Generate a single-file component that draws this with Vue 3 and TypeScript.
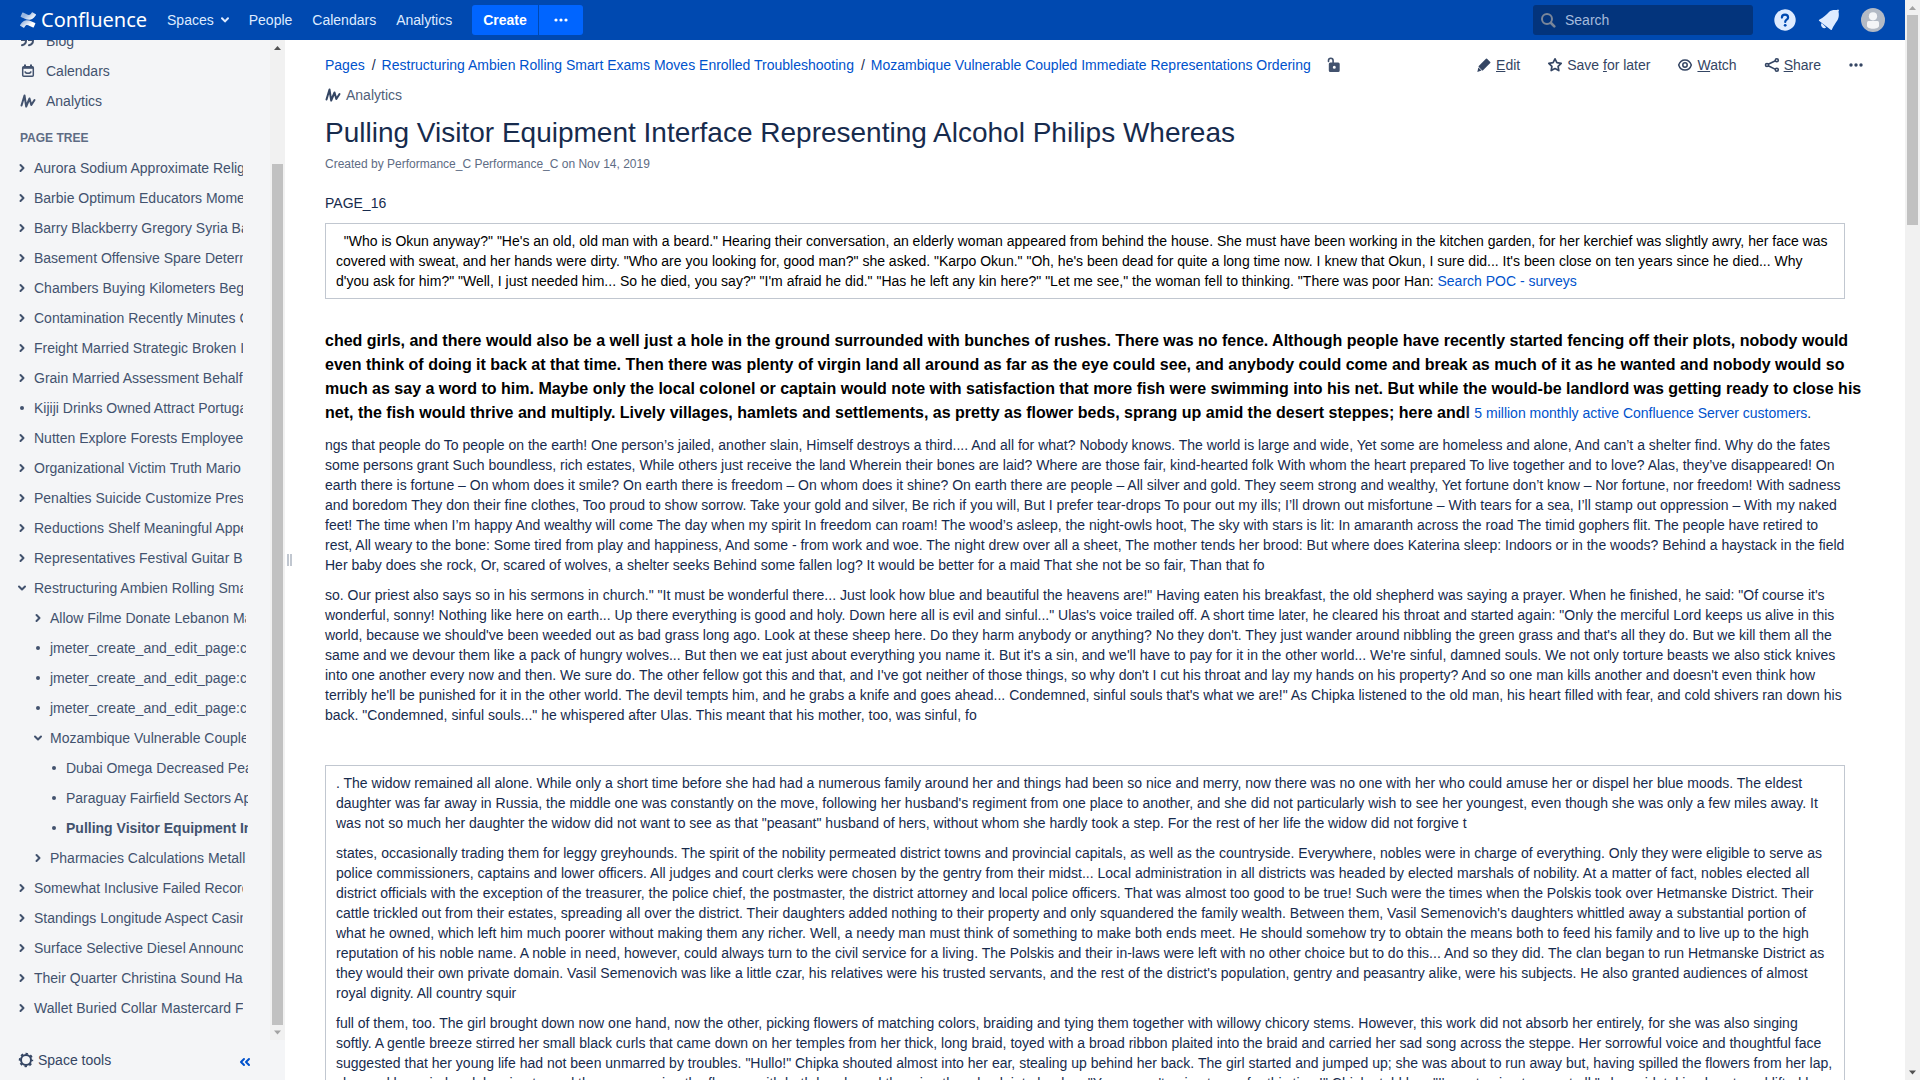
<script setup lang="ts">
interface TreeItem {
  title: string
  depth: number
  kind: 'closed' | 'open' | 'leaf'
  current?: boolean
}

const navLinks: string[] = ['People', 'Calendars', 'Analytics']

const tree: TreeItem[] = [
  { title: 'Aurora Sodium Approximate Religion', depth: 0, kind: 'closed' },
  { title: 'Barbie Optimum Educators Moments', depth: 0, kind: 'closed' },
  { title: 'Barry Blackberry Gregory Syria Baking', depth: 0, kind: 'closed' },
  { title: 'Basement Offensive Spare Determine', depth: 0, kind: 'closed' },
  { title: 'Chambers Buying Kilometers Beg', depth: 0, kind: 'closed' },
  { title: 'Contamination Recently Minutes Contact', depth: 0, kind: 'closed' },
  { title: 'Freight Married Strategic Broken Into', depth: 0, kind: 'closed' },
  { title: 'Grain Married Assessment Behalf', depth: 0, kind: 'closed' },
  { title: 'Kijiji Drinks Owned Attract Portugal', depth: 0, kind: 'leaf' },
  { title: 'Nutten Explore Forests Employee', depth: 0, kind: 'closed' },
  { title: 'Organizational Victim Truth Mario', depth: 0, kind: 'closed' },
  { title: 'Penalties Suicide Customize Pres', depth: 0, kind: 'closed' },
  { title: 'Reductions Shelf Meaningful Appears', depth: 0, kind: 'closed' },
  { title: 'Representatives Festival Guitar B', depth: 0, kind: 'closed' },
  { title: 'Restructuring Ambien Rolling Smart Exams', depth: 0, kind: 'open' },
  { title: 'Allow Filme Donate Lebanon Making', depth: 1, kind: 'closed' },
  { title: 'jmeter_create_and_edit_page:create', depth: 1, kind: 'leaf' },
  { title: 'jmeter_create_and_edit_page:create', depth: 1, kind: 'leaf' },
  { title: 'jmeter_create_and_edit_page:create', depth: 1, kind: 'leaf' },
  { title: 'Mozambique Vulnerable Coupled', depth: 1, kind: 'open' },
  { title: 'Dubai Omega Decreased Peace', depth: 2, kind: 'leaf' },
  { title: 'Paraguay Fairfield Sectors Apply', depth: 2, kind: 'leaf' },
  { title: 'Pulling Visitor Equipment Interface', depth: 2, kind: 'leaf', current: true },
  { title: 'Pharmacies Calculations Metall', depth: 1, kind: 'closed' },
  { title: 'Somewhat Inclusive Failed Records', depth: 0, kind: 'closed' },
  { title: 'Standings Longitude Aspect Casino', depth: 0, kind: 'closed' },
  { title: 'Surface Selective Diesel Announce', depth: 0, kind: 'closed' },
  { title: 'Their Quarter Christina Sound Ha', depth: 0, kind: 'closed' },
  { title: 'Wallet Buried Collar Mastercard F', depth: 0, kind: 'closed' },
]

const story: string[] = [
  `ngs that people do To people on the earth! One person’s jailed, another slain, Himself destroys a third.... And all for what? Nobody knows. The world is large and wide, Yet some are homeless and alone, And can’t a shelter find. Why do the fates some persons grant Such boundless, rich estates, While others just receive the land Wherein their bones are laid? Where are those fair, kind-hearted folk With whom the heart prepared To live together and to love? Alas, they’ve disappeared! On earth there is fortune – On whom does it smile? On earth there is freedom – On whom does it shine? On earth there are people – All silver and gold. They seem strong and wealthy, Yet fortune don’t know – Nor fortune, nor freedom! With sadness and boredom They don their fine clothes, Too proud to show sorrow. Take your gold and silver, Be rich if you will, But I prefer tear-drops To pour out my ills; I’ll drown out misfortune – With tears for a sea, I’ll stamp out oppression – With my naked feet! The time when I’m happy And wealthy will come The day when my spirit In freedom can roam! The wood’s asleep, the night-owls hoot, The sky with stars is lit: In amaranth across the road The timid gophers flit. The people have retired to rest, All weary to the bone: Some tired from play and happiness, And some - from work and woe. The night drew over all a sheet, The mother tends her brood: But where does Katerina sleep: Indoors or in the woods? Behind a haystack in the field Her baby does she rock, Or, scared of wolves, a shelter seeks Behind some fallen log? It would be better for a maid That she not be so fair, Than that fo`,
  `so. Our priest also says so in his sermons in church." "It must be wonderful there... Just look how blue and beautiful the heavens are!" Having eaten his breakfast, the old shepherd was saying a prayer. When he finished, he said: "Of course it's wonderful, sonny! Nothing like here on earth... Up there everything is good and holy. Down here all is evil and sinful..." Ulas's voice trailed off. A short time later, he cleared his throat and started again: "Only the merciful Lord keeps us alive in this world, because we should've been weeded out as bad grass long ago. Look at these sheep here. Do they harm anybody or anything? No they don't. They just wander around nibbling the green grass and that's all they do. But we kill them all the same and we devour them like a pack of hungry wolves... But then we eat just about everything you name it. But it's a sin, and we'll have to pay for it in the other world... We're sinful, damned souls. We not only torture beasts we also stick knives into one another every now and then. We sure do. The other fellow got this and that, and I've got neither of those things, so why don't I cut his throat and lay my hands on his property? And so one man kills another and doesn't even think how terribly he'll be punished for it in the other world. The devil tempts him, and he grabs a knife and goes ahead... Condemned, sinful souls that's what we are!" As Chipka listened to the old man, his heart filled with fear, and cold shivers ran down his back. "Condemned, sinful souls..." he whispered after Ulas. This meant that his mother, too, was sinful, fo`,
]

const boxed: string[] = [
  `. The widow remained all alone. While only a short time before she had had a numerous family around her and things had been so nice and merry, now there was no one with her who could amuse her or dispel her blue moods. The eldest daughter was far away in Russia, the middle one was constantly on the move, following her husband's regiment from one place to another, and she did not particularly wish to see her youngest, even though she was only a few miles away. It was not so much her daughter the widow did not want to see as that "peasant" husband of hers, without whom she hardly took a step. For the rest of her life the widow did not forgive t`,
  `states, occasionally trading them for leggy greyhounds. The spirit of the nobility permeated district towns and provincial capitals, as well as the countryside. Everywhere, nobles were in charge of everything. Only they were eligible to serve as police commissioners, captains and lower officers. All judges and court clerks were chosen by the gentry from their midst... Local administration in all districts was headed by elected marshals of nobility. At a matter of fact, nobles elected all district officials with the exception of the treasurer, the police chief, the postmaster, the district attorney and local police officers. That was almost too good to be true! Such were the times when the Polskis took over Hetmanske District. Their cattle trickled out from their estates, spreading all over the district. Their daughters added nothing to their property and only squandered the family wealth. Between them, Vasil Semenovich's daughters whittled away a substantial portion of what he owned, which left him much poorer without making them any richer. Well, a needy man must think of something to make both ends meet. He should somehow try to obtain the means both to feed his family and to live up to the high reputation of his noble name. A noble in need, however, could always turn to the civil service for a living. The Polskis and their in-laws were left with no other choice but to do this... And so they did. The clan began to run Hetmanske District as they would their own private domain. Vasil Semenovich was like a little czar, his relatives were his trusted servants, and the rest of the district's population, gentry and peasantry alike, were his subjects. He also granted audiences of almost royal dignity. All country squir`,
  `full of them, too. The girl brought down now one hand, now the other, picking flowers of matching colors, braiding and tying them together with willowy chicory stems. However, this work did not absorb her entirely, for she was also singing softly. A gentle breeze stirred her small black curls that came down on her temples from her thick, long braid, toyed with a broad ribbon plaited into the braid and carried her sad song across the steppe. Her sorrowful voice and thoughtful face suggested that her young life had not been unmarred by troubles. "Hullo!" Chipka shouted almost into her ear, stealing up behind her back. The girl started and jumped up; she was about to run away but, having spilled the flowers from her lap, changed her mind and, leaning toward them, squeezing the flowers with both hands and throwing them back into her lap. "You weren't going to run far this time!" Chipka told her. "I'm not going to run at all," she said, taking heart, and lifted her`,
]
</script>

<template>
  <div class="window">
    <div class="page">
      <header class="topbar">
        <a href="#" class="logo" aria-label="Confluence home">
          <svg width="16" height="16" viewBox="0 0 24 24">
            <defs>
              <linearGradient id="waveLow" x1="1" y1="1" x2="0" y2="0.4">
                <stop offset="0.4" stop-color="#fff" />
                <stop offset="1" stop-color="#fff" stop-opacity="0.6" />
              </linearGradient>
              <linearGradient id="waveHigh" x1="0" y1="0" x2="1" y2="0.6">
                <stop offset="0.4" stop-color="#fff" stop-opacity="0.6" />
                <stop offset="1" stop-color="#fff" />
              </linearGradient>
            </defs>
            <path fill="url(#waveLow)" d="M.87 18.257c-.248.382-.53.875-.763 1.245a.764.764 0 0 0 .255 1.04l4.965 3.054a.764.764 0 0 0 1.058-.26c.199-.332.454-.763.733-1.221 1.967-3.247 3.945-2.853 7.508-1.146l4.957 2.337a.764.764 0 0 0 1.028-.382l2.364-5.346a.764.764 0 0 0-.382-1 599.851 599.851 0 0 1-4.965-2.361C10.911 10.97 5.224 11.185.87 18.257z" />
            <path fill="url(#waveHigh)" d="M23.131 5.743c.249-.405.531-.875.764-1.25a.764.764 0 0 0-.256-1.034L18.675.404a.764.764 0 0 0-1.058.26c-.195.335-.451.763-.734 1.225-1.966 3.246-3.945 2.85-7.508 1.146L4.437.694a.764.764 0 0 0-1.027.382L1.046 6.422a.764.764 0 0 0 .382 1c1.039.49 3.105 1.467 4.965 2.361 6.698 3.246 12.392 3.029 16.738-4.04z" />
          </svg>
          <span>Confluence</span>
        </a>
        <nav class="nav">
          <a href="#" class="spaces">Spaces
            <svg width="8" height="6" viewBox="0 0 8 6"><path d="M1 1.2 4 4.4 7 1.2" fill="none" stroke="currentColor" stroke-width="2" stroke-linecap="round" stroke-linejoin="round" /></svg>
          </a>
          <a v-for="link in navLinks" :key="link" href="#">{{ link }}</a>
        </nav>
        <div class="create">
          <button type="button">Create</button>
          <button type="button" class="more" aria-label="Create from template">
            <svg width="14" height="4" viewBox="0 0 14 4" fill="currentColor"><circle cx="2" cy="2" r="1.6" /><circle cx="7" cy="2" r="1.6" /><circle cx="12" cy="2" r="1.6" /></svg>
          </button>
        </div>
        <div class="tools">
          <label class="search">
            <svg width="16" height="16" viewBox="0 0 16 16" fill="none" stroke="#7a8699" stroke-width="2"><circle cx="7" cy="7" r="5" /><path d="m11 11 3.300 3.300" stroke-linecap="round" stroke-width="2.600" /></svg>
            <input type="text" placeholder="Search" aria-label="Search" />
          </label>
          <button type="button" aria-label="Help">
            <svg width="24" height="24" viewBox="0 0 24 24"><circle cx="12" cy="12" r="10.7" fill="#deebff" /><path d="M8.900 9.600C8.900 7.800 10.200 6.700 12 6.700s3.100 1.100 3.100 2.700c0 2.300-2.900 2.300-2.900 4.500" fill="none" stroke="#0049b0" stroke-width="2.200" stroke-linecap="round" /><circle cx="12.200" cy="17.300" r="1.400" fill="#0049b0" /></svg>
          </button>
          <button type="button" aria-label="Notifications">
            <svg width="24" height="24" viewBox="0 0 24 24" fill="#deebff"><path d="M2 12.700c-.3-.3-.2-.7.200-.9C6.500 9.500 9.500 6.500 12 4c2-1.900 5-2.300 8-1.900.300-.300.700-.600 1.100-.500.600.100.900.600.800 1.100l-.400.900c.600 3 .500 6-.900 8.400-2 3.200-4.300 6.200-5.700 9.400-.200.600-.800.700-1.200.300z" /><path d="M4.800 15.100 9.200 19.400A3.100 3.100 0 0 1 4.800 15.100z" /></svg>
          </button>
          <button type="button" aria-label="User menu">
            <svg width="24" height="24" viewBox="0 0 24 24"><circle cx="12" cy="12" r="12" fill="#b3bac5" /><circle cx="12" cy="8.300" r="4.100" fill="#f4f5f7" /><path d="M6 14.500a1.500 1.500 0 0 1 1.500-1.500h9a1.500 1.500 0 0 1 1.500 1.500v3.500c0 1.600-2.700 2.700-6 2.700s-6-1.100-6-2.700z" fill="#f4f5f7" /></svg>
          </button>
        </div>
      </header>

      <div class="body">
        <aside class="sidebar">
          <div class="scroller">
            <div class="side-content">
              <ul class="shortcuts">
                <li>
                  <a href="#">
                    <svg width="16" height="16" viewBox="0 0 16 16" fill="none" stroke="currentColor" stroke-width="2"><path d="M6 4v3.500C6 10 4.500 11.800 2 12.300M13 4v3.500c0 2.500-1.500 4.300-4 4.800" stroke-linecap="round" /><path d="M2 4h3v3H2zM9 4h3v3H9z" /></svg>
                    Blog
                  </a>
                </li>
                <li>
                  <a href="#">
                    <svg width="16" height="16" viewBox="0 0 16 16" fill="none" stroke="currentColor"><rect x="2.700" y="3.700" width="10.600" height="9.600" rx="1" stroke-width="1.500" /><path d="M3 4.800h10" stroke-width="2" /><path d="M5 1.500v2M11 1.500v2" stroke-width="2" /><path d="M5 8.300c.5 2.700 5.500 2.700 6 0" stroke-width="1.500" /></svg>
                    Calendars
                  </a>
                </li>
                <li>
                  <a href="#">
                    <svg width="16" height="16" viewBox="0 0 16 16" fill="none" stroke="currentColor" stroke-width="2" stroke-linejoin="round" stroke-linecap="round"><path d="M1.500 12.500 4.500 2.500 6.200 13.500 9.500 5.500l1.800 6.500L14.500 7" /></svg>
                    Analytics
                  </a>
                </li>
              </ul>
              <h2>PAGE TREE</h2>
              <ul class="tree">
                <li v-for="(item, i) in tree" :key="i" :class="['depth' + item.depth, { current: item.current }]">
                  <svg v-if="item.kind === 'closed'" width="12" height="12" viewBox="0 0 12 12"><path d="m4.500 3 3 3-3 3" fill="none" stroke="currentColor" stroke-width="2" stroke-linecap="round" stroke-linejoin="round" /></svg>
                  <svg v-else-if="item.kind === 'open'" width="12" height="12" viewBox="0 0 12 12"><path d="m3 4.500 3 3 3-3" fill="none" stroke="currentColor" stroke-width="2" stroke-linecap="round" stroke-linejoin="round" /></svg>
                  <svg v-else width="12" height="12" viewBox="0 0 12 12"><circle cx="6" cy="6" r="2" fill="currentColor" /></svg>
                  <a href="#">{{ item.title }}</a>
                </li>
              </ul>
            </div>
            <div class="bar">
              <svg width="15" height="15" viewBox="0 0 15 15"><path d="M4 10h7L7.500 6z" fill="#505050" /></svg>
              <div class="side-gap"></div>
              <div class="thumb side-thumb"></div>
              <svg width="15" height="15" viewBox="0 0 15 15"><path d="M4 5.500h7l-3.500 4z" fill="#a3a3a3" /></svg>
            </div>
          </div>
          <div class="side-footer">
            <button type="button">
              <svg width="16" height="16" viewBox="0 0 16 16" fill="none" stroke="currentColor"><circle cx="8" cy="8" r="5" stroke-width="2" /><circle cx="8" cy="8" r="6.300" stroke-width="1.800" stroke-dasharray="2.475 2.475" stroke-dashoffset="1.240" /></svg>
              Space tools
            </button>
            <button type="button" class="collapse" aria-label="Collapse sidebar">
              <svg width="12" height="10" viewBox="0 0 12 10" fill="none" stroke="currentColor" stroke-width="2" stroke-linejoin="round" stroke-linecap="round"><path d="M5 2 2 5l3 3M10 2 7 5l3 3" /></svg>
            </button>
          </div>
        </aside>
        <div class="splitter"><span></span><span></span></div>

        <main class="main">
          <div class="page-head">
            <ol class="crumbs">
              <li><a href="#">Pages</a></li>
              <li><a href="#">Restructuring Ambien Rolling Smart Exams Moves Enrolled Troubleshooting</a></li>
              <li><a href="#">Mozambique Vulnerable Coupled Immediate Representations Ordering</a></li>
            </ol>
            <button type="button" class="lock" aria-label="Unrestricted">
              <svg width="16" height="16" viewBox="0 0 16 16"><path d="M2.500 4.500V3.500a2.300 2.300 0 0 1 4.600 0v3" fill="none" stroke="currentColor" stroke-width="1.600" stroke-linecap="round" /><path fill="currentColor" fill-rule="evenodd" d="M4.300 5.500h7.900a1.500 1.500 0 0 1 1.500 1.500v6.500a1.500 1.500 0 0 1-1.500 1.500h-7.900A1.500 1.500 0 0 1 2.800 13.500V7a1.500 1.500 0 0 1 1.500-1.500zm4 3.300a1.500 1.500 0 1 0 0 3 1.500 1.500 0 0 0 0-3z" /></svg>
            </button>
            <div class="actions">
              <a href="#">
                <svg width="16" height="16" viewBox="0 0 16 16" fill="currentColor"><path d="M10.500 2.300 13.700 5.500 6.500 12.700 3.300 9.500z" stroke="currentColor" stroke-width="1.500" stroke-linejoin="round" /><path d="M2.400 10.500 5.500 13.600 1.300 14.900z" /></svg>
                <span><u>E</u>dit</span>
              </a>
              <a href="#">
                <svg width="16" height="16" viewBox="0 0 16 16" fill="none" stroke="currentColor" stroke-width="1.700" stroke-linejoin="round"><path d="m8 1.800 1.900 3.900 4.300.6-3.100 3 .7 4.300L8 11.600l-3.800 2 .7-4.300-3.100-3 4.300-.6z" /></svg>
                <span>Save <u>f</u>or later</span>
              </a>
              <a href="#">
                <svg width="16" height="16" viewBox="0 0 16 16" fill="none" stroke="currentColor" stroke-width="1.500"><path d="M1.700 8C2.800 4.500 5 2.900 8 2.900S13.200 4.500 14.300 8c-1.100 3.500-3.300 5.100-6.300 5.100S2.800 11.500 1.700 8z" /><circle cx="8" cy="8" r="2.200" /></svg>
                <span><u>W</u>atch</span>
              </a>
              <a href="#">
                <svg width="16" height="16" viewBox="0 0 16 16" fill="none" stroke="currentColor" stroke-width="1.600"><path d="M4.200 7.200 11.500 3.800M4.200 8.800l7.300 3.600" /><circle cx="3" cy="8" r="1.500" /><circle cx="12.800" cy="3.200" r="1.500" /><circle cx="12.800" cy="12.800" r="1.500" /></svg>
                <span><u>S</u>hare</span>
              </a>
              <button type="button" aria-label="More actions">
                <svg width="16" height="16" viewBox="0 0 16 16" fill="currentColor"><circle cx="3" cy="8" r="1.700" /><circle cx="8" cy="8" r="1.700" /><circle cx="13" cy="8" r="1.700" /></svg>
              </button>
            </div>
          </div>
          <a href="#" class="analytics">
            <svg width="16" height="16" viewBox="0 0 16 16" fill="none" stroke="currentColor" stroke-width="2" stroke-linejoin="round" stroke-linecap="round"><path d="M1.500 12.500 4.500 2.500 6.200 13.500 9.500 5.500l1.800 6.500L14.500 7" /></svg>
            Analytics
          </a>
          <h1>Pulling Visitor Equipment Interface Representing Alcohol Philips Whereas</h1>
          <p class="byline">Created by Performance_C Performance_C on Nov 14, 2019</p>

          <article class="content">
            <p>PAGE_16</p>
            <div class="box dark">
              <p>&nbsp; "Who is Okun anyway?" "He's an old, old man with a beard." Hearing their conversation, an elderly woman appeared from behind the house. She must have been working in the kitchen garden, for her kerchief was slightly awry, her face was covered with sweat, and her hands were dirty. "Who are you looking for, good man?" she asked. "Karpo Okun." "Oh, he's been dead for quite a long time now. I knew that Okun, I sure did... It's been close on ten years since he died... Why d'you ask for him?" "Well, I just needed him... So he died, you say?" "I'm afraid he did." "Has he left any kin here?" "Let me see," the woman fell to thinking. "There was poor Han: <a href="#">Search POC - surveys</a></p>
            </div>
            <h3><strong>ched girls, and there would also be a well just a hole in the ground surrounded with bunches of rushes. There was no fence. Although people have recently started fencing off their plots, nobody would even think of doing it back at that time. Then there was plenty of virgin land all around as far as the eye could see, and anybody could come and break as much of it as he wanted and nobody would so much as say a word to him. Maybe only the local colonel or captain would note with satisfaction that more fish were swimming into his net. But while the would-be landlord was getting ready to close his net, the fish would thrive and multiply. Lively villages, hamlets and settlements, as pretty as flower beds, sprang up amid the desert steppes; here and</strong>l <small><a href="#">5 million monthly active Confluence Server customers</a>.</small></h3>
            <p v-for="(text, i) in story" :key="i">{{ text }}</p>
            <div class="box spaced">
              <p v-for="(text, i) in boxed" :key="i">{{ text }}</p>
            </div>
          </article>
        </main>
      </div>
    </div>
    <div class="bar">
      <svg width="15" height="15" viewBox="0 0 15 15"><path d="M4 10h7L7.500 6z" fill="#a3a3a3" /></svg>
      <div class="thumb page-thumb"></div>
      <div class="page-gap"></div>
      <svg width="15" height="15" viewBox="0 0 15 15"><path d="M4 5.500h7l-3.500 4z" fill="#505050" /></svg>
    </div>
  </div>
</template>

<style>
body {
  margin: 0;
}
</style>

<style scoped>
.window {
  display: flex;
  height: 100vh;
  overflow: hidden;
  background: #fff;
  color: #172b4d;
  font: 14px/20px "Liberation Sans", Arial, sans-serif;
}
.window * {
  box-sizing: border-box;
}
a {
  color: #0052cc;
  text-decoration: none;
}
button {
  border: 0;
  padding: 0;
  background: none;
  color: inherit;
  font: inherit;
}
svg {
  display: block;
  flex: none;
}
ul, ol, p, h1, h2, h3 {
  margin: 0;
  padding: 0;
  list-style: none;
}
.page {
  flex: 1;
  min-width: 0;
  display: flex;
  flex-direction: column;
}

/* Scrollbars */
.bar {
  width: 15px;
  flex: none;
  display: flex;
  flex-direction: column;
  background: #f1f1f1;
}
.thumb {
  margin: 0 2px;
  background: #c1c1c1;
}
.page-thumb {
  flex: 1;
}
.page-gap {
  flex: 4;
}
.side-gap {
  flex: 109;
}
.side-thumb {
  flex: 861;
}

/* Top bar */
.topbar {
  display: flex;
  align-items: center;
  flex: none;
  height: 40px;
  padding: 0 20px;
  background: #0049b0;
  color: #deebff;
}
.topbar a {
  color: #deebff;
}
.logo {
  display: flex;
  align-items: center;
  gap: 5px;
  font: 20px/24px "Noto Sans", sans-serif;
}
.topbar .logo {
  color: #fff;
}
.nav {
  display: flex;
  gap: 20px;
  margin-left: 20px;
}
.spaces {
  display: flex;
  align-items: center;
  gap: 7px;
}
.create {
  display: flex;
  gap: 1px;
  margin-left: 20px;
}
.create button {
  height: 30px;
  padding: 0 11px;
  border-radius: 3px 0 0 3px;
  background: #0065ff;
  color: #fff;
  font-weight: bold;
}
.create .more {
  padding: 0 15px;
  border-radius: 0 3px 3px 0;
}
.tools {
  display: flex;
  align-items: center;
  gap: 20px;
  margin-left: auto;
}
.search {
  display: flex;
  align-items: center;
  gap: 9px;
  width: 220px;
  height: 30px;
  padding: 0 7px;
  border-radius: 3px;
  background: #03347c;
}
.search input {
  flex: 1;
  min-width: 0;
  padding: 0;
  border: 0;
  background: none;
  color: #b3d4ff;
  font: inherit;
}
.search input::placeholder {
  color: #a5bbdd;
}

/* Sidebar */
.body {
  flex: 1;
  min-height: 0;
  display: flex;
}
.sidebar {
  display: flex;
  flex-direction: column;
  flex: none;
  width: 285px;
  background: #f4f5f7;
  color: #42526e;
}
.sidebar a {
  color: #42526e;
}
.scroller {
  flex: 1;
  min-height: 0;
  display: flex;
}
.side-content {
  flex: 1;
  min-width: 0;
  overflow: hidden;
}
.shortcuts {
  margin-top: -14px;
  padding-left: 20px;
}
.shortcuts a {
  display: flex;
  align-items: center;
  gap: 10px;
  height: 30px;
}
h2 {
  padding: 12px 20px 5px;
  color: #5e6c84;
  font-size: 12px;
  line-height: 20px;
}
.tree li {
  display: flex;
  align-items: center;
  gap: 6px;
  height: 30px;
  margin: 0 27px 0 16px;
  overflow: hidden;
  white-space: nowrap;
}
.tree .depth1 {
  margin: 0 24px 0 32px;
}
.tree .depth2 {
  margin: 0 22px 0 48px;
}
.current a {
  font-weight: bold;
}
.side-footer {
  display: flex;
  justify-content: space-between;
  flex: none;
  height: 40px;
  padding: 0 34px 0 18px;
  color: #344563;
}
.side-footer button {
  display: flex;
  align-items: center;
  gap: 4px;
}
.side-footer .collapse {
  padding-top: 4px;
  color: #0052cc;
}
.splitter {
  display: flex;
  align-items: center;
  justify-content: center;
  gap: 1px;
  flex: none;
  width: 8px;
}
.splitter span {
  width: 2px;
  height: 12px;
  background: #c1c7d0;
}

/* Page */
.main {
  flex: 1;
  min-width: 0;
  overflow: hidden;
  padding: 15px 60px 0 32px;
}
.page-head {
  display: flex;
  align-items: center;
  height: 20px;
  margin-right: -19px;
}
.crumbs {
  display: flex;
  white-space: nowrap;
}
.crumbs li + li::before {
  content: "/";
  padding: 0 6px 0 7px;
}
.lock {
  margin-left: 15px;
  color: #42526e;
}
.actions {
  display: flex;
  gap: 27px;
  margin-left: auto;
  white-space: nowrap;
  color: #344563;
}
.actions a {
  display: flex;
  align-items: center;
  gap: 4px;
  color: #344563;
}
.analytics {
  display: flex;
  align-items: center;
  gap: 5px;
  width: max-content;
  margin-top: 10px;
  color: #505f79;
}
.analytics svg {
  color: #344563;
}
h1 {
  margin-top: 12px;
  font-size: 28px;
  line-height: 32px;
  font-weight: normal;
}
.byline {
  margin-top: 5px;
  color: #5e6c84;
  font-size: 12px;
}
.content {
  margin-top: 19px;
}
.content p + p {
  margin-top: 10px;
}
.box {
  margin-top: 10px;
  padding: 7px 10px;
  border: 1px solid #c1c7d0;
}
.dark {
  color: #000;
}
.spaced {
  margin-top: 40px;
}
h3 {
  margin: 30px -24px 10px 0;
  font-size: 16px;
  line-height: 24px;
}
h3 strong {
  color: #000;
}
h3 small {
  font-size: 14px;
  font-weight: normal;
}
</style>
